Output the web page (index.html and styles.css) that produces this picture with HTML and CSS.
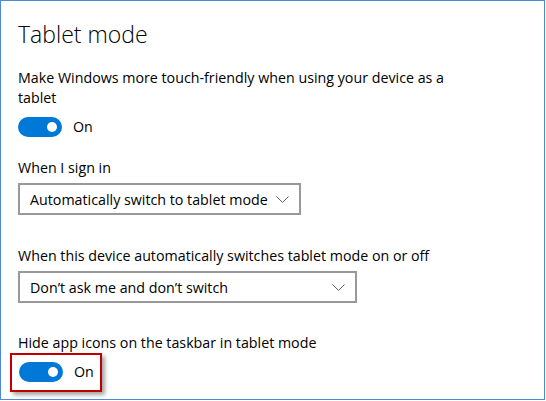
FILE: index.html
```html
<!DOCTYPE html>
<html>
<head>
<meta charset="utf-8">
<link rel="stylesheet" href="styles.css">
</head>
<body>
<div class="frame">
  <h1 class="title">Tablet mode</h1>
  <p class="desc">Make Windows more touch-friendly when using your device as a tablet</p>
  <div class="toggle-row">
    <span class="toggle"><span class="knob"></span></span>
    <span class="state">On</span>
  </div>

  <p class="label label-signin">When I sign in</p>
  <div class="select select-signin">
    <span class="select-text">Automatically switch to tablet mode</span>
    <svg class="chev" width="13" height="7" viewBox="0 0 13 7"><path d="M0.5 0.5 L6.5 6.5 L12.5 0.5" fill="none" stroke="#666" stroke-width="1"/></svg>
  </div>

  <p class="label label-switch">When this device automatically switches tablet mode on or off</p>
  <div class="select select-switch">
    <span class="select-text">Don’t ask me and don’t switch</span>
    <svg class="chev" width="13" height="7" viewBox="0 0 13 7"><path d="M0.5 0.5 L6.5 6.5 L12.5 0.5" fill="none" stroke="#666" stroke-width="1"/></svg>
  </div>

  <p class="label label-hide">Hide app icons on the taskbar in tablet mode</p>
  <div class="highlight">
    <div class="toggle-row">
      <span class="toggle"><span class="knob"></span></span>
      <span class="state">On</span>
    </div>
  </div>
</div>
</body>
</html>
```

FILE: styles.css
```css
html, body {
  margin: 0;
  padding: 0;
  background: #fff;
}
.frame {
  box-sizing: border-box;
  width: 545px;
  height: 400px;
  border: 1px solid #4d8ad8;
  padding: 0 0 0 17px;
  font-family: "Segoe UI", "Open Sans", "Noto Sans", sans-serif;
  font-size: 14.25px;
  color: #000;
  overflow: hidden;
}
.title {
  margin: 17px 0 0 0;
  font-size: 23px;
  font-weight: 300;
  line-height: 32px;
}
.desc {
  margin: 18px 0 0 0;
  width: 440px;
  line-height: 20px;
}
.toggle-row {
  display: flex;
  align-items: center;
  gap: 11px;
  height: 20px;
  margin-top: 9px;
}
.toggle {
  box-sizing: border-box;
  width: 44px;
  height: 20px;
  border-radius: 10px;
  background: #0078d7;
  display: flex;
  align-items: center;
  justify-content: flex-end;
  padding-right: 5px;
}
.knob {
  width: 10px;
  height: 10px;
  border-radius: 50%;
  background: #fff;
}
.state {
  line-height: 20px;
}
.label {
  margin: 0;
  line-height: 20px;
}
.label-signin { margin-top: 21px; }
.label-switch { margin-top: 31px; }
.label-hide { margin-top: 30px; }
.select {
  box-sizing: border-box;
  height: 32px;
  border: 2px solid #999;
  display: flex;
  align-items: center;
  justify-content: space-between;
  padding: 0 10px 0 10px;
}
.select-signin { width: 283px; margin-top: 5px; }
.select-switch { width: 339px; margin-top: 5px; }
.chev { display: block; }
.highlight {
  box-sizing: border-box;
  width: 92px;
  height: 39px;
  margin-left: -8px;
  margin-top: 0;
  border: 2px solid #c00000;
  padding-left: 7px;
  box-shadow: 3px 3px 4px rgba(0,0,0,0.35);
}
.highlight .toggle-row {
  margin-top: 7px;
}
```
